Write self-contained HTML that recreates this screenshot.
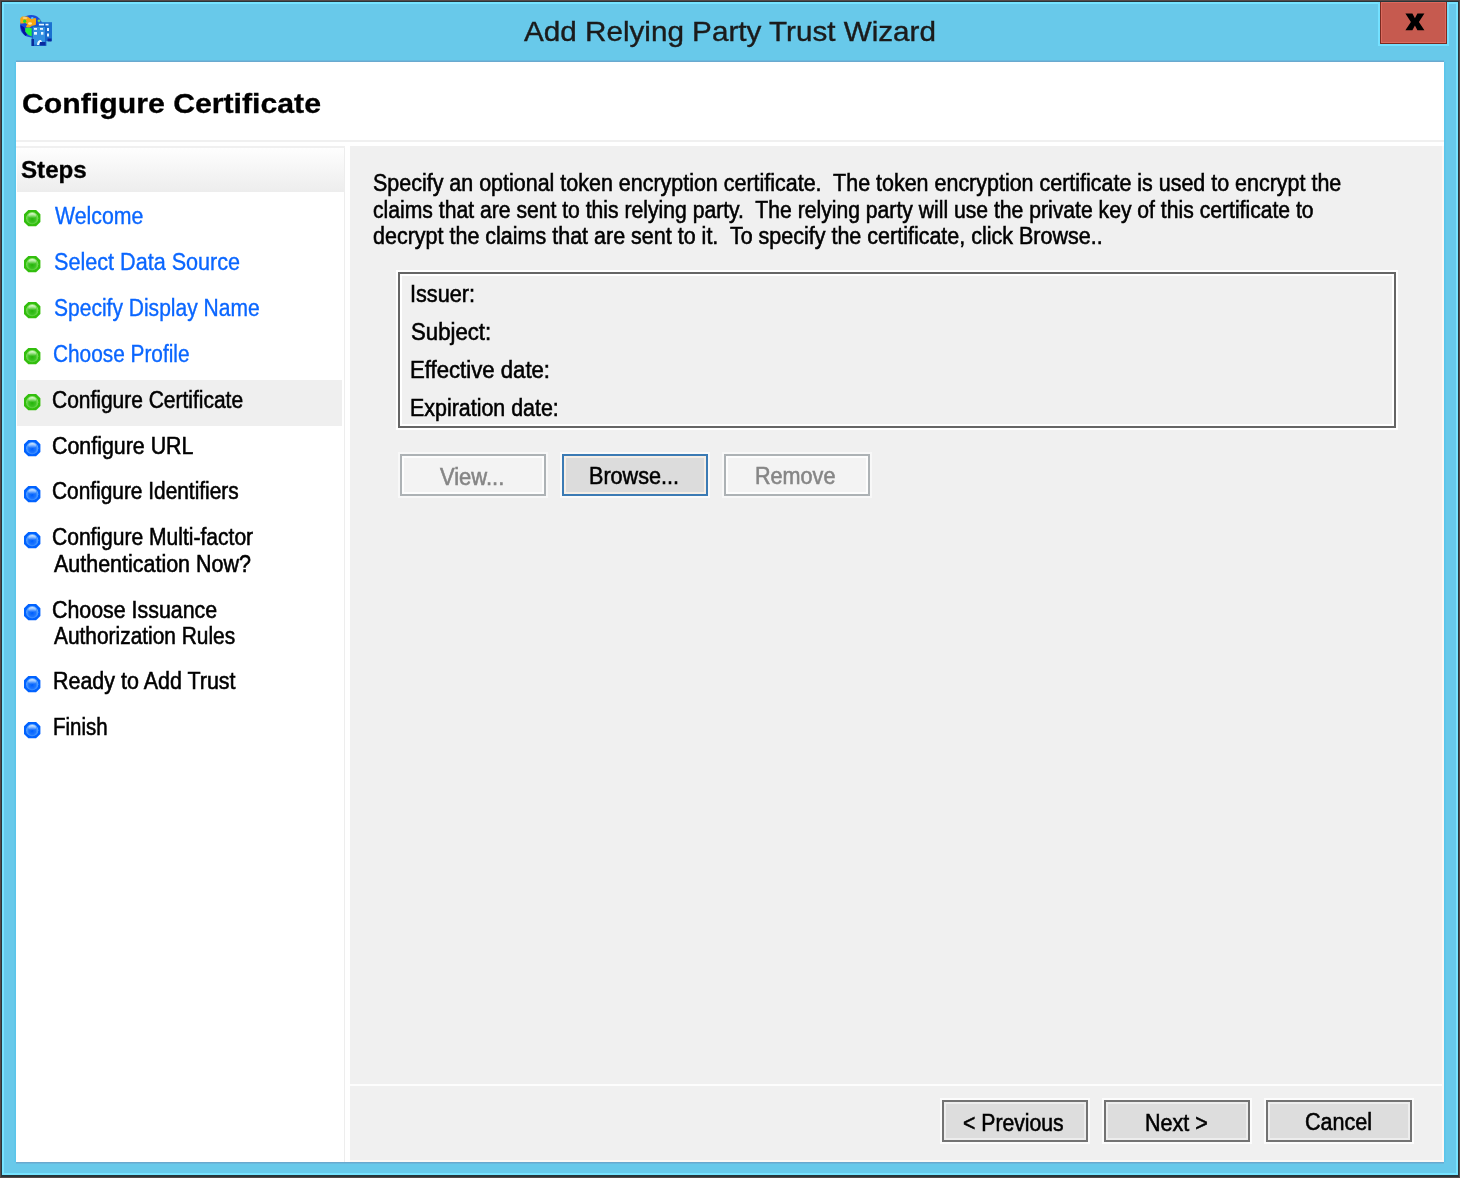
<!DOCTYPE html>
<html><head><meta charset="utf-8">
<style>
*{margin:0;padding:0;box-sizing:border-box}
html,body{width:1460px;height:1178px;overflow:hidden;background:#564947}
body{position:relative;font-family:"Liberation Sans",sans-serif}
.abs{position:absolute}
.t{position:absolute;white-space:pre;line-height:40px;transform-origin:0 0;font-family:"Liberation Sans",sans-serif}
#frame0{left:1px;top:1px;width:1458px;height:1176px;background:#27353a}
#frame{left:2px;top:2px;width:1456px;height:1173px;background:#68c9ea;border:2px solid #76e3ff}
#closeglow{left:1378px;top:2px;width:71px;height:44px;background:#74e0ff}
#close{left:1380px;top:2px;width:67px;height:41.5px;background:#c65a4f;border:1.5px solid #7c2a20;border-top:none;box-shadow:inset 0 0 0 1px #dc6a5e}
#xic{left:1405px;top:13px}
#icon{left:14px;top:8px}
#content{left:16px;top:62px;width:1428px;height:1100px;background:#fff;box-shadow:0 -1.5px 0 #6aa9cf,-1.5px 0 0 #5bc5ea,1.5px 0 0 #5bc5ea,0 1.5px 0 #6aa9cf}
#hline{left:16px;top:140px;width:1428px;height:2px;background:#f0f0f0}
#steps{left:16px;top:146px;width:329px;height:1016px;background:#fff;border-right:1.5px solid #ededed}
#stepsline{left:16px;top:146px;width:329px;height:2px;background:#f0f0f0}
#stepshdr{left:17px;top:148px;width:327px;height:44px;background:linear-gradient(#fefefe,#ededed)}
#right{left:350px;top:146px;width:1094px;height:1016px;background:#f0f0f0;border-right:2px solid #fbf7f5;border-bottom:2px solid #fbf8f5}
#sep{left:350px;top:1084px;width:1092px;height:2px;background:#fdfdfd}
.dot{position:absolute;left:23.7px;width:16.5px;height:16.5px;overflow:visible}
#sel{left:17px;top:380px;width:325px;height:46px;background:#efefef}
#grp{left:396px;top:270px;width:1002px;height:160px;border:2px solid #fff}
#grpi{left:398px;top:272px;width:998px;height:156px;border:2px solid #656565}
#grpi2{left:400px;top:274px;width:994px;height:152px;border:2px solid #fff}
.btn{position:absolute;height:42px;width:146px}
.btn.dis{background:#f3f3f3;border:2px solid #adb2b5;box-shadow:inset 0 0 0 2px #fdfdfd,0 0 0 2px #f8f8f8}
.btn.def{background:#dcdcdc;border:2px solid #3c7bb4;box-shadow:inset 0 0 0 2px #f5eee6,0 0 0 2px #fafafa}
.btn.nrm{background:#dddddd;border:2px solid #737373;box-shadow:inset 0 0 0 2px #ededed,0 0 0 2px #fcfcfc}

</style></head><body>
<svg width="0" height="0" style="position:absolute">
 <defs>
  <filter id="soft" x="-20%" y="-20%" width="140%" height="140%"><feGaussianBlur stdDeviation="0.55"/></filter>
  <radialGradient id="rgG" cx="0.5" cy="0.58" r="0.55"><stop offset="0" stop-color="#26b40c"/><stop offset="0.5" stop-color="#3cc220"/><stop offset="1" stop-color="#8ee46e"/></radialGradient>
  <radialGradient id="rgB" cx="0.5" cy="0.58" r="0.55"><stop offset="0" stop-color="#0060ff"/><stop offset="0.5" stop-color="#1a74ff"/><stop offset="1" stop-color="#6cb0ff"/></radialGradient>
  <linearGradient id="hlG" x1="0" y1="0" x2="0" y2="1"><stop offset="0" stop-color="#e0fad4"/><stop offset="1" stop-color="#e0fad4" stop-opacity="0"/></linearGradient>
  <linearGradient id="hlB" x1="0" y1="0" x2="0" y2="1"><stop offset="0" stop-color="#d4e8ff"/><stop offset="1" stop-color="#d4e8ff" stop-opacity="0"/></linearGradient>
 </defs>
</svg>
<div id="frame0" class="abs"></div>
<div id="frame" class="abs"></div>
<div id="closeglow" class="abs"></div>
<div id="close" class="abs"></div>
<svg id="xic" class="abs" width="22" height="20" viewBox="0 0 22 20"><polygon points="0.4,0.6 7.4,0.6 9.9,5.2 12.4,0.6 19.4,0.6 13.9,8.9 19.4,17.2 12.4,17.2 9.9,12.6 7.4,17.2 0.4,17.2 5.9,8.9" fill="#000"/></svg>
<svg id="icon" class="abs" width="44" height="44" viewBox="0 0 44 44">
 <g>
  <circle cx="17.2" cy="18.2" r="11.2" fill="#1a4cd8"/>
  <ellipse cx="18.3" cy="10.2" rx="1.3" ry="1.2" fill="#50bfff"/>
  <path d="M6.2,10.6 L8,8.4 L13.3,8.4 L16.4,10.6 L17.7,11.3 L20.8,10 L22.1,10.4 L21.9,16.8 L19.5,17.7 L17.7,18.3 L15.5,19.5 L12.8,19.5 L11.9,18.3 L13.5,16.4 L11.3,15 L8.4,15.5 L6.4,15.5 Z" fill="#f7a80e"/>
  <ellipse cx="16" cy="15.5" rx="2" ry="1.3" fill="#ffe6a0"/>
  <ellipse cx="11" cy="10" rx="2.5" ry="0.9" fill="#ffd080"/>
  <ellipse cx="10.7" cy="13.3" rx="1.6" ry="1.8" fill="#18e030"/>
  <path d="M6.5,17 Q7,24 11.5,28 L13,26.5 Q10.5,23 10.5,19.5 Z" fill="#0812a0"/>
  <path d="M11.3,20 Q15,19.3 18.3,20.3 L18.3,28.6 Q13.5,27.5 11.3,23.5 Z" fill="#22f040"/>
  <ellipse cx="25" cy="12.8" rx="1.5" ry="1.2" fill="#70e060"/>
  <rect x="24" y="14.2" width="14" height="18.8" fill="#1a70d0"/>
  <rect x="18.3" y="18.3" width="13.5" height="19" fill="#3290e0" stroke="#1660c8" stroke-width="1.2"/>
  <rect x="25" y="15.8" width="5" height="1.6" fill="#e8f6ff"/><rect x="31.5" y="15.8" width="3" height="1.6" fill="#e8f6ff"/>
  <rect x="33" y="20" width="2" height="3" fill="#e8f6ff"/><rect x="33" y="25.5" width="2" height="3" fill="#e8f6ff"/>
  <rect x="20" y="20" width="3" height="1.8" fill="#e8f6ff"/><rect x="26" y="20" width="3" height="1.8" fill="#e8f6ff"/>
  <rect x="20" y="24" width="3" height="2.7" fill="#e8f6ff"/><rect x="27" y="24" width="2.4" height="2.7" fill="#e8f6ff"/>
  <rect x="17.5" y="31" width="2.5" height="7" fill="#0a2a9a"/>
  <path d="M23,37 Q23,32 27,32 L28,34 Q25,34 25,37 Z" fill="#e8f6ff"/>
  <rect x="26" y="34" width="5.5" height="3.4" fill="#0a2aa0"/>
  <rect x="33.5" y="30.5" width="4" height="3" fill="#0a2aa0"/>
 </g>
</svg>
<div id="content" class="abs"></div>
<div id="hline" class="abs"></div>
<div id="steps" class="abs"></div>
<div id="stepsline" class="abs"></div>
<div id="stepshdr" class="abs"></div>
<div id="sel" class="abs"></div>
<div id="right" class="abs"></div>
<div id="sep" class="abs"></div>
<svg class="dot" style="top:209.7px" viewBox="0 0 16.5 16.5"><g filter="url(#soft)"><polygon points="4.3,0 12.1,0 16.4,4.3 16.4,11.9 12.1,16.2 4.3,16.2 0,11.9 0,4.3" fill="#30be0c"/>
   <circle cx="8.2" cy="8.2" r="6.1" fill="url(#rgG)"/>
   <ellipse cx="8.2" cy="5.6" rx="3.8" ry="2.6" fill="url(#hlG)"/></g></svg>
<svg class="dot" style="top:255.7px" viewBox="0 0 16.5 16.5"><g filter="url(#soft)"><polygon points="4.3,0 12.1,0 16.4,4.3 16.4,11.9 12.1,16.2 4.3,16.2 0,11.9 0,4.3" fill="#30be0c"/>
   <circle cx="8.2" cy="8.2" r="6.1" fill="url(#rgG)"/>
   <ellipse cx="8.2" cy="5.6" rx="3.8" ry="2.6" fill="url(#hlG)"/></g></svg>
<svg class="dot" style="top:301.7px" viewBox="0 0 16.5 16.5"><g filter="url(#soft)"><polygon points="4.3,0 12.1,0 16.4,4.3 16.4,11.9 12.1,16.2 4.3,16.2 0,11.9 0,4.3" fill="#30be0c"/>
   <circle cx="8.2" cy="8.2" r="6.1" fill="url(#rgG)"/>
   <ellipse cx="8.2" cy="5.6" rx="3.8" ry="2.6" fill="url(#hlG)"/></g></svg>
<svg class="dot" style="top:347.7px" viewBox="0 0 16.5 16.5"><g filter="url(#soft)"><polygon points="4.3,0 12.1,0 16.4,4.3 16.4,11.9 12.1,16.2 4.3,16.2 0,11.9 0,4.3" fill="#30be0c"/>
   <circle cx="8.2" cy="8.2" r="6.1" fill="url(#rgG)"/>
   <ellipse cx="8.2" cy="5.6" rx="3.8" ry="2.6" fill="url(#hlG)"/></g></svg>
<svg class="dot" style="top:393.7px" viewBox="0 0 16.5 16.5"><g filter="url(#soft)"><polygon points="4.3,0 12.1,0 16.4,4.3 16.4,11.9 12.1,16.2 4.3,16.2 0,11.9 0,4.3" fill="#30be0c"/>
   <circle cx="8.2" cy="8.2" r="6.1" fill="url(#rgG)"/>
   <ellipse cx="8.2" cy="5.6" rx="3.8" ry="2.6" fill="url(#hlG)"/></g></svg>
<svg class="dot" style="top:439.7px" viewBox="0 0 16.5 16.5"><g filter="url(#soft)"><polygon points="4.3,0 12.1,0 16.4,4.3 16.4,11.9 12.1,16.2 4.3,16.2 0,11.9 0,4.3" fill="#0062ff"/>
   <circle cx="8.2" cy="8.2" r="6.1" fill="url(#rgB)"/>
   <ellipse cx="8.2" cy="5.6" rx="3.8" ry="2.6" fill="url(#hlB)"/></g></svg>
<svg class="dot" style="top:485.7px" viewBox="0 0 16.5 16.5"><g filter="url(#soft)"><polygon points="4.3,0 12.1,0 16.4,4.3 16.4,11.9 12.1,16.2 4.3,16.2 0,11.9 0,4.3" fill="#0062ff"/>
   <circle cx="8.2" cy="8.2" r="6.1" fill="url(#rgB)"/>
   <ellipse cx="8.2" cy="5.6" rx="3.8" ry="2.6" fill="url(#hlB)"/></g></svg>
<svg class="dot" style="top:531.7px" viewBox="0 0 16.5 16.5"><g filter="url(#soft)"><polygon points="4.3,0 12.1,0 16.4,4.3 16.4,11.9 12.1,16.2 4.3,16.2 0,11.9 0,4.3" fill="#0062ff"/>
   <circle cx="8.2" cy="8.2" r="6.1" fill="url(#rgB)"/>
   <ellipse cx="8.2" cy="5.6" rx="3.8" ry="2.6" fill="url(#hlB)"/></g></svg>
<svg class="dot" style="top:603.7px" viewBox="0 0 16.5 16.5"><g filter="url(#soft)"><polygon points="4.3,0 12.1,0 16.4,4.3 16.4,11.9 12.1,16.2 4.3,16.2 0,11.9 0,4.3" fill="#0062ff"/>
   <circle cx="8.2" cy="8.2" r="6.1" fill="url(#rgB)"/>
   <ellipse cx="8.2" cy="5.6" rx="3.8" ry="2.6" fill="url(#hlB)"/></g></svg>
<svg class="dot" style="top:675.7px" viewBox="0 0 16.5 16.5"><g filter="url(#soft)"><polygon points="4.3,0 12.1,0 16.4,4.3 16.4,11.9 12.1,16.2 4.3,16.2 0,11.9 0,4.3" fill="#0062ff"/>
   <circle cx="8.2" cy="8.2" r="6.1" fill="url(#rgB)"/>
   <ellipse cx="8.2" cy="5.6" rx="3.8" ry="2.6" fill="url(#hlB)"/></g></svg>
<svg class="dot" style="top:721.7px" viewBox="0 0 16.5 16.5"><g filter="url(#soft)"><polygon points="4.3,0 12.1,0 16.4,4.3 16.4,11.9 12.1,16.2 4.3,16.2 0,11.9 0,4.3" fill="#0062ff"/>
   <circle cx="8.2" cy="8.2" r="6.1" fill="url(#rgB)"/>
   <ellipse cx="8.2" cy="5.6" rx="3.8" ry="2.6" fill="url(#hlB)"/></g></svg>
<div id="grp" class="abs"></div>
<div id="grpi" class="abs"></div>
<div id="grpi2" class="abs"></div>
<div class="btn dis" style="left:400px;top:454px"></div>
<div class="btn def" style="left:562px;top:454px"></div>
<div class="btn dis" style="left:724px;top:454px"></div>
<div class="btn nrm" style="left:942px;top:1100px"></div>
<div class="btn nrm" style="left:1104px;top:1100px"></div>
<div class="btn nrm" style="left:1266px;top:1100px"></div>

<div class="t" style="left:523.6px;top:11.3px;font-size:28.5px;font-weight:normal;color:#1b1b1b;transform:scaleX(1.0404);-webkit-text-stroke:0.4px #1b1b1b">Add Relying Party Trust Wizard</div>
<div class="t" style="left:22.2px;top:84.3px;font-size:27.5px;font-weight:bold;color:#000;transform:scaleX(1.0993);-webkit-text-stroke:0.3px #000">Configure Certificate</div>
<div class="t" style="left:21.1px;top:149.5px;font-size:24.5px;font-weight:bold;color:#000;transform:scaleX(0.9862);-webkit-text-stroke:0.3px #000">Steps</div>
<div class="t" style="left:54.8px;top:196.4px;font-size:23px;font-weight:normal;color:#0a66ff;transform:scaleX(0.9253);-webkit-text-stroke:0.35px #0a66ff">Welcome</div>
<div class="t" style="left:53.9px;top:242.4px;font-size:23px;font-weight:normal;color:#0a66ff;transform:scaleX(0.9393);-webkit-text-stroke:0.35px #0a66ff">Select Data Source</div>
<div class="t" style="left:53.9px;top:288.4px;font-size:23px;font-weight:normal;color:#0a66ff;transform:scaleX(0.9139);-webkit-text-stroke:0.35px #0a66ff">Specify Display Name</div>
<div class="t" style="left:53.1px;top:333.6px;font-size:23px;font-weight:normal;color:#0a66ff;transform:scaleX(0.9047);-webkit-text-stroke:0.35px #0a66ff">Choose Profile</div>
<div class="t" style="left:52.3px;top:379.8px;font-size:23px;font-weight:normal;color:#000;transform:scaleX(0.9115);-webkit-text-stroke:0.55px #000">Configure Certificate</div>
<div class="t" style="left:52.3px;top:425.9px;font-size:23px;font-weight:normal;color:#000;transform:scaleX(0.9298);-webkit-text-stroke:0.55px #000">Configure URL</div>
<div class="t" style="left:52.3px;top:471.4px;font-size:23px;font-weight:normal;color:#000;transform:scaleX(0.9069);-webkit-text-stroke:0.55px #000">Configure Identifiers</div>
<div class="t" style="left:52.3px;top:517.2px;font-size:23px;font-weight:normal;color:#000;transform:scaleX(0.9146);-webkit-text-stroke:0.55px #000">Configure Multi-factor</div>
<div class="t" style="left:54.4px;top:543.6px;font-size:23px;font-weight:normal;color:#000;transform:scaleX(0.9332);-webkit-text-stroke:0.55px #000">Authentication Now?</div>
<div class="t" style="left:52.3px;top:589.7px;font-size:23px;font-weight:normal;color:#000;transform:scaleX(0.9290);-webkit-text-stroke:0.55px #000">Choose Issuance</div>
<div class="t" style="left:54.0px;top:616.0px;font-size:23px;font-weight:normal;color:#000;transform:scaleX(0.9085);-webkit-text-stroke:0.55px #000">Authorization Rules</div>
<div class="t" style="left:53.1px;top:661.2px;font-size:23px;font-weight:normal;color:#000;transform:scaleX(0.9330);-webkit-text-stroke:0.55px #000">Ready to Add Trust</div>
<div class="t" style="left:53.2px;top:707.3px;font-size:23px;font-weight:normal;color:#000;transform:scaleX(0.8897);-webkit-text-stroke:0.55px #000">Finish</div>
<div class="t" style="left:372.7px;top:163.4px;font-size:23px;font-weight:normal;color:#000;transform:scaleX(0.9331);-webkit-text-stroke:0.55px #000">Specify an optional token encryption certificate.  The token encryption certificate is used to encrypt the</div>
<div class="t" style="left:372.7px;top:189.8px;font-size:23px;font-weight:normal;color:#000;transform:scaleX(0.9194);-webkit-text-stroke:0.55px #000">claims that are sent to this relying party.  The relying party will use the private key of this certificate to</div>
<div class="t" style="left:372.7px;top:216.0px;font-size:23px;font-weight:normal;color:#000;transform:scaleX(0.9347);-webkit-text-stroke:0.55px #000">decrypt the claims that are sent to it.  To specify the certificate, click Browse..</div>
<div class="t" style="left:410.1px;top:273.9px;font-size:23px;font-weight:normal;color:#000;transform:scaleX(0.9415);-webkit-text-stroke:0.55px #000">Issuer:</div>
<div class="t" style="left:411.0px;top:312.0px;font-size:23px;font-weight:normal;color:#000;transform:scaleX(0.9650);-webkit-text-stroke:0.55px #000">Subject:</div>
<div class="t" style="left:410.1px;top:350.2px;font-size:23px;font-weight:normal;color:#000;transform:scaleX(0.9634);-webkit-text-stroke:0.55px #000">Effective date:</div>
<div class="t" style="left:410.1px;top:388.4px;font-size:23px;font-weight:normal;color:#000;transform:scaleX(0.9308);-webkit-text-stroke:0.55px #000">Expiration date:</div>
<div class="t" style="left:440.0px;top:456.6px;font-size:23px;font-weight:normal;color:#858585;transform:scaleX(0.9545);-webkit-text-stroke:0.55px #858585">View...</div>
<div class="t" style="left:588.8px;top:456.4px;font-size:23px;font-weight:normal;color:#000;transform:scaleX(0.9380);-webkit-text-stroke:0.55px #000">Browse...</div>
<div class="t" style="left:754.7px;top:456.4px;font-size:23px;font-weight:normal;color:#858585;transform:scaleX(0.9386);-webkit-text-stroke:0.55px #858585">Remove</div>
<div class="t" style="left:963.0px;top:1102.6px;font-size:23px;font-weight:normal;color:#000;transform:scaleX(0.9213);-webkit-text-stroke:0.55px #000">&lt; Previous</div>
<div class="t" style="left:1145.1px;top:1102.6px;font-size:23px;font-weight:normal;color:#000;transform:scaleX(0.9359);-webkit-text-stroke:0.55px #000">Next &gt;</div>
<div class="t" style="left:1304.5px;top:1102.4px;font-size:23px;font-weight:normal;color:#000;transform:scaleX(0.9377);-webkit-text-stroke:0.55px #000">Cancel</div>
</body></html>
